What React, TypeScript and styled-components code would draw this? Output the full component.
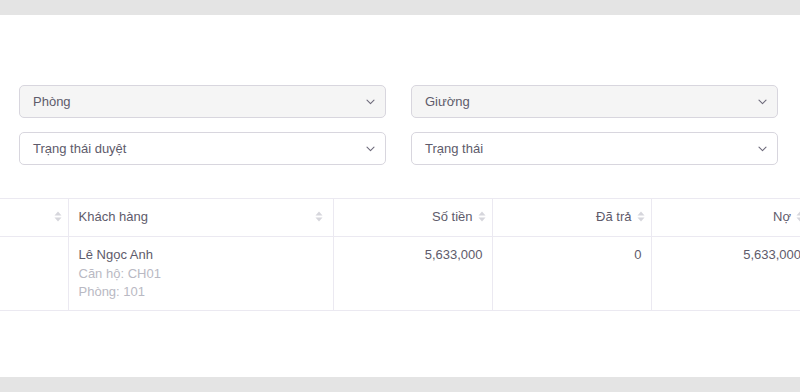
import { createGlobalStyle, styled } from "styled-components";

const GlobalStyle = createGlobalStyle`
  html, body {
    margin: 0;
    padding: 0;
    background: #e4e4e4;
    font-family: "Liberation Sans", Arial, sans-serif;
    overflow: hidden;
  }
`;

interface Column {
  title: string;
  width: number;
  align: "left" | "right";
}

const columns: Column[] = [
  { title: "", width: 68, align: "right" },
  { title: "Khách hàng", width: 265, align: "left" },
  { title: "Số tiền", width: 159, align: "right" },
  { title: "Đã trả", width: 159, align: "right" },
  { title: "Nợ", width: 159, align: "right" },
];

function Chevron() {
  return (
    <svg width="9" height="6" viewBox="0 0 9 6" fill="none">
      <path d="M1 1.2l3.5 3.4L8 1.2" stroke="#6e6b7b" strokeWidth="1.1" strokeLinecap="round" strokeLinejoin="round" />
    </svg>
  );
}

function SortIcon() {
  return (
    <svg width="8" height="11" viewBox="0 0 8 11">
      <path d="M4 0.5L7.5 4.5H0.5z" fill="#d6d6dc" />
      <path d="M4 10.5L7.5 6.5H0.5z" fill="#d6d6dc" />
    </svg>
  );
}

function Select({ label, filled }: { label: string; filled?: boolean }) {
  return (
    <SelectBox $filled={filled}>
      <span>{label}</span>
      <Chevron />
    </SelectBox>
  );
}

function App() {
  return (
    <>
      <GlobalStyle />
      <Page>
        <Panel>
          <Filters>
            <Select label="Phòng" filled />
            <Select label="Giường" filled />
            <Select label="Trạng thái duyệt" />
            <Select label="Trạng thái" />
          </Filters>
          <TableWrap>
            <Table>
              <colgroup>
                {columns.map((c, i) => (
                  <col key={i} style={{ width: c.width }} />
                ))}
              </colgroup>
              <thead>
                <tr>
                  {columns.map((c, i) => (
                    <HeadCell key={i} $align={c.align}>
                      <HeadInner $align={c.align}>
                        {c.title && <span>{c.title}</span>}
                        <SortIcon />
                      </HeadInner>
                    </HeadCell>
                  ))}
                </tr>
              </thead>
              <tbody>
                <tr>
                  <Cell $align="right" />
                  <Cell $align="left">
                    <Name>Lê Ngọc Anh</Name>
                    <Muted>Căn hộ: CH01</Muted>
                    <Muted>Phòng: 101</Muted>
                  </Cell>
                  <Cell $align="right">5,633,000</Cell>
                  <Cell $align="right">0</Cell>
                  <Cell $align="right">5,633,000</Cell>
                </tr>
              </tbody>
            </Table>
          </TableWrap>
        </Panel>
      </Page>
    </>
  );
}

export default App;

const Page = styled.div`
  height: 392px;
  padding: 15px 0;
  box-sizing: border-box;
`;

const Panel = styled.div`
  background: #fff;
  height: 362px;
  padding-top: 70px;
  box-sizing: border-box;
  overflow: hidden;
`;

const Filters = styled.div`
  display: grid;
  grid-template-columns: 367px 367px;
  column-gap: 25px;
  row-gap: 14px;
  padding: 0 19px;
`;

const SelectBox = styled.div<{ $filled?: boolean }>`
  height: 33px;
  box-sizing: border-box;
  border: 1px solid #d8d6de;
  border-radius: 5px;
  background: ${(p) => (p.$filled ? "#f5f5f5" : "#fff")};
  display: flex;
  align-items: center;
  justify-content: space-between;
  padding: 0 10px 0 13px;
  font-size: 13px;
  color: #5e5b6b;
`;

const TableWrap = styled.div`
  margin-top: 33px;
  width: 800px;
  overflow: hidden;
`;

const Table = styled.table`
  border-collapse: collapse;
  table-layout: fixed;
  width: 810px;
  font-size: 13px;
  color: #5e5b6b;
`;

const HeadCell = styled.th<{ $align: "left" | "right" }>`
  height: 38px;
  box-sizing: border-box;
  padding: 0 10px 2px;
  border-top: 1px solid #ebe9f1;
  border-bottom: 1px solid #ebe9f1;
  border-left: 1px solid #ebe9f1;
  font-weight: normal;
  text-align: ${(p) => p.$align};
  &:first-child {
    border-left: none;
  }
`;

const HeadInner = styled.div<{ $align: "left" | "right" }>`
  display: flex;
  align-items: center;
  gap: 5px;
  justify-content: ${(p) => (p.$align === "left" ? "space-between" : "flex-end")};
  margin-right: ${(p) => (p.$align === "right" ? "-4px" : "0")};
`;

const Cell = styled.td<{ $align: "left" | "right" }>`
  height: 74px;
  box-sizing: border-box;
  vertical-align: top;
  padding: 9px 9px 0 10px;
  border-bottom: 1px solid #ebe9f1;
  border-left: 1px solid #ebe9f1;
  text-align: ${(p) => p.$align};
  line-height: 18.5px;
  &:first-child {
    border-left: none;
  }
`;

const Name = styled.div`
  color: #5e5b6b;
`;

const Muted = styled.div`
  color: #b9b9c3;
`;
